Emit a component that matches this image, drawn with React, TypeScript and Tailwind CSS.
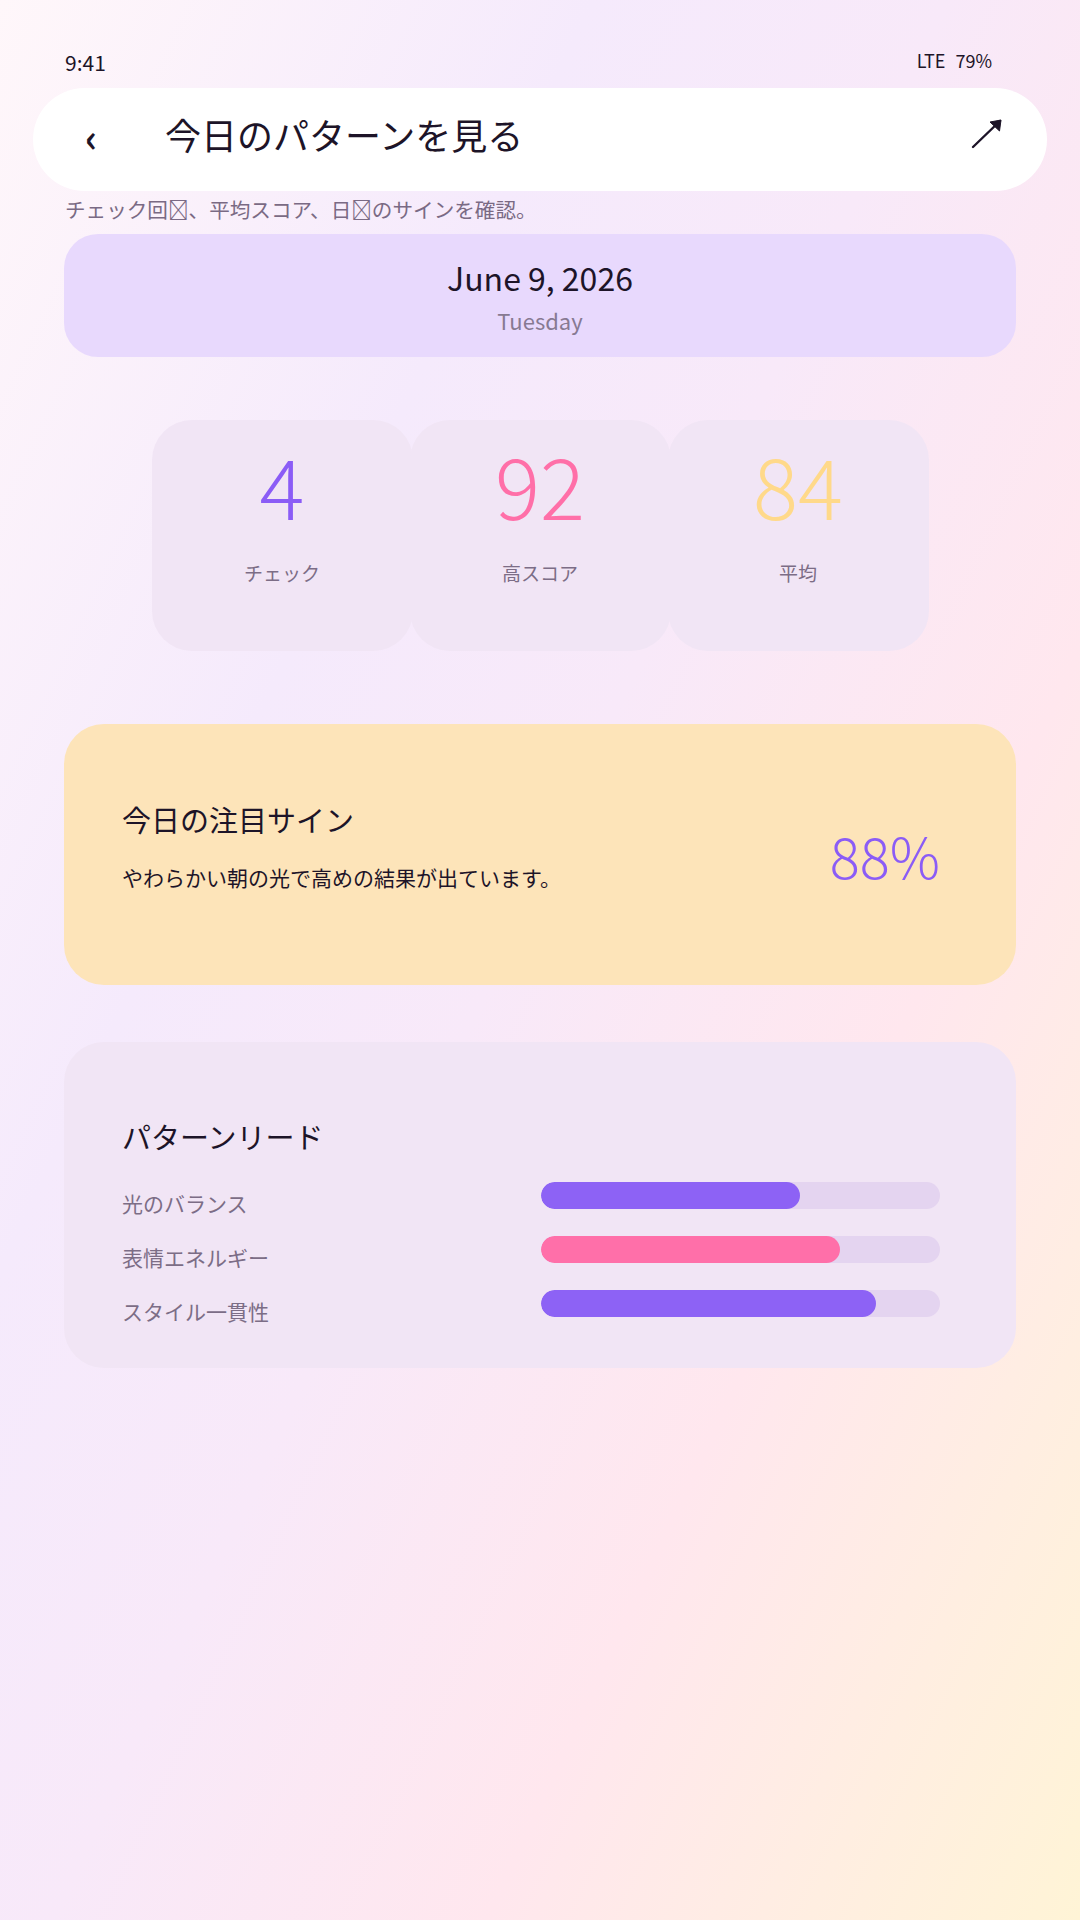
import React from 'react';

const stats = [
  { value: '4', label: 'チェック', color: 'text-[#8b5cf6]' },
  { value: '92', label: '高スコア', color: 'text-[#ff6fa8]' },
  { value: '84', label: '平均', color: 'text-[#ffd98a]' },
];

const patterns = [
  { label: '光のバランス', value: 65, color: 'bg-[#8d62f5]' },
  { label: '表情エネルギー', value: 75, color: 'bg-[#ff6fa9]' },
  { label: 'スタイル一貫性', value: 84, color: 'bg-[#8d62f5]' },
];

function ArrowUpRight() {
  return (
    <svg width="32" height="30" viewBox="0 0 32 30" fill="none" className="-mt-[12px]">
      <line x1="2" y1="28" x2="29" y2="2" stroke="#1d1428" strokeWidth="2.4" strokeLinecap="round" />
      <path d="M19 3 L30 1 L28.5 12 Z" fill="#1d1428" stroke="#1d1428" strokeWidth="1" strokeLinejoin="round" />
    </svg>
  );
}

export default function App() {
  return (
    <div
      className="min-h-screen bg-[linear-gradient(115deg,#fff7fa_0%,#f5eafc_30%,#f8e9f9_48%,#ffe7ee_70%,#fff4d6_100%)] text-[#1d1428]"
      style={{ fontFamily: '"Noto Sans CJK JP", "Noto Sans", sans-serif' }}
    >
      {/* status bar */}
      <div className="flex items-start justify-between pl-[65px] pr-[88px] pt-[47px]">
        <span className="text-[21px] leading-[30px]">9:41</span>
        <span className="flex gap-[10px] text-[18px] leading-[27px]">
          <span>LTE</span>
          <span>79%</span>
        </span>
      </div>

      {/* header */}
      <div className="mx-[33px] mt-[11px] flex h-[103px] items-center rounded-full bg-white pl-[52px] pr-[44px]">
        <span className="-mt-[8px] w-[70px] text-[38px] font-bold leading-none">‹</span>
        <h1 className="-mt-[11px] flex-1 pl-[10px] text-[36px] leading-[52px]">今日のパターンを見る</h1>
        <ArrowUpRight />
      </div>

      <p className="mt-[3px] px-[65px] text-[20.6px] leading-[30px] text-[#7a6a84]">
        チェック回{'\uE000'}、平均スコア、日{'\uE000'}のサインを確認。
      </p>

      {/* date */}
      <div className="mx-[64px] mt-[10px] flex flex-col items-center gap-[4px] rounded-[34px] bg-[#e8d9fd] py-[20px]">
        <div className="text-[32px] leading-[46px]">June 9, 2026</div>
        <div className="text-[22px] leading-[33px] text-[#877a92]">Tuesday</div>
      </div>

      {/* stats */}
      <div className="mt-[63px] flex justify-center">
        {stats.map((s, i) => (
          <div
            key={s.label}
            className={`flex h-[231px] w-[261px] flex-col items-center rounded-[40px] bg-[#f1e5f5] pt-[22px] ${i > 0 ? '-ml-[3px]' : ''}`}
          >
            <div className={`text-[84px] font-light leading-[84px] ${s.color}`}>{s.value}</div>
            <div className="mt-[33px] text-[19px] leading-[28px] text-[#7c6d86]">{s.label}</div>
          </div>
        ))}
      </div>

      {/* highlight */}
      <div className="mx-[64px] mt-[73px] flex h-[261px] items-center justify-between rounded-[40px] bg-[#fde4b9] pl-[58px] pr-[76px]">
        <div className="-mt-[20px]">
          <h2 className="text-[29px] leading-[42px]">今日の注目サイン</h2>
          <p className="mt-[22px] text-[21px] leading-[30px]">やわらかい朝の光で高めの結果が出ています。</p>
        </div>
        <div className="text-[56px] font-light leading-[64px] text-[#8b5cf6]">88%</div>
      </div>

      {/* pattern read */}
      <div className="mx-[64px] mt-[57px] rounded-[40px] bg-[#f1e5f5] pb-[42px] pl-[58px] pr-[76px] pt-[73px]">
        <h2 className="text-[29px] leading-[42px]">パターンリード</h2>
        <div className="mt-[15px] flex flex-col gap-[8px]">
          {patterns.map((p) => (
            <div key={p.label} className="flex items-center">
              <span className="flex-1 pt-[16px] text-[21px] leading-[30px] text-[#7c6d86]">{p.label}</span>
              <div className="h-[27px] w-[399px] overflow-hidden rounded-full bg-[#e4d4f0]">
                <div className={`h-full rounded-full ${p.color}`} style={{ width: `${p.value}%` }} />
              </div>
            </div>
          ))}
        </div>
      </div>
    </div>
  );
}
